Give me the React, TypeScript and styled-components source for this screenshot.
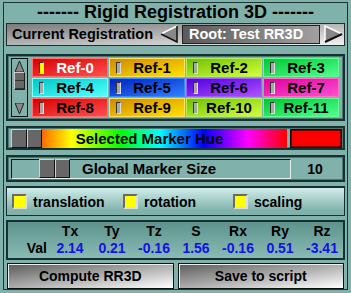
import React from "react";
import styled, { createGlobalStyle } from "styled-components";

const Global = createGlobalStyle`
  html, body { margin: 0; padding: 0; background: #80b1ab; }
  * { box-sizing: border-box; }
`;

const Page = styled.div`
  width: 351px;
  height: 293px;
  background: #80b1ab;
  padding: 2px 3px 3px 3px;
  font-family: "Liberation Sans", Arial, sans-serif;
  font-weight: bold;
  color: #000;
`;

const Frame = styled.div`
  height: 288px;
  border: 1px solid #1c3533;
  padding: 0 2px 0 2px;
  display: flex;
  flex-direction: column;
`;

const Title = styled.div`
  height: 18px;
  line-height: 18px;
  font-size: 18px;
  text-align: center;
  white-space: pre;
`;

const RegRow = styled.div`
  margin-top: 2px;
  height: 23px;
  border: 1px solid #2a2a2a;
  background: linear-gradient(to bottom right, #7a7a7a, #f2f2f2);
  display: flex;
  align-items: center;
  padding-left: 5px;
  font-size: 14.5px;
`;

const RegLabel = styled.span`
  flex: 0 0 148px;
`;

const ArrowBtn = styled.svg`
  flex: 0 0 auto;
`;

const RootBox = styled.div`
  width: 138px;
  height: 19px;
  border: 1px solid #222;
  background: linear-gradient(to right, #5a5a5a, #a0a0a0);
  color: #fff;
  font-size: 14.5px;
  line-height: 17px;
  padding-left: 6px;
  margin-left: 4px;
`;

const Panel = styled.div<{ $mt: number; $h: number }>`
  margin-top: ${(p) => p.$mt}px;
  height: ${(p) => p.$h}px;
  border: 2px solid #163230;
  box-shadow: inset 0 0 0 1px #4d7874;
  display: flex;
  align-items: center;
`;

const Scroll = styled.div`
  width: 17px;
  height: 59px;
  margin: 0 4px 0 3px;
  border: 1px solid #111;
  background: #80b1ab;
  display: flex;
  flex-direction: column;
  align-items: center;
  justify-content: space-between;
  padding: 2px 0;
`;

const ScrollThumb = styled.div`
  width: 11px;
  height: 18px;
  background: #666;
  border: 1px solid #222;
  border-top-color: #ccc;
  border-left-color: #ccc;
  display: flex;
  flex-direction: column;
  & > div { flex: 1; border-bottom: 1px solid #333; }
`;

const Grid = styled.div`
  display: grid;
  grid-template-columns: repeat(4, 76px);
  grid-auto-rows: 19px;
  gap: 1px;
`;

const Cell = styled.div<{ $a: string; $b: string; $edge: string; $light?: boolean }>`
  position: relative;
  background: linear-gradient(to bottom right, ${(p) => p.$a}, ${(p) => p.$b});
  border: 1px solid ${(p) => p.$edge};
  color: ${(p) => (p.$light ? "#fff" : "#000")};
  font-size: 15px;
  line-height: 17px;
  text-align: center;
  padding-left: 10px;
`;

const Marker = styled.span<{ $on?: boolean }>`
  position: absolute;
  left: 6px;
  top: 3px;
  width: 5px;
  height: 12px;
  background: ${(p) => (p.$on ? "#ffff00" : "#a8a8a8")};
  border: 1px solid #333;
  border-right-color: #ddd;
  border-bottom-color: #ddd;
`;

const SliderThumb = styled.div`
  flex: 0 0 auto;
  width: 31px;
  height: 19px;
  display: flex;
  & > div {
    flex: 1;
    background: #676767;
    border: 1px solid #111;
    border-top-color: #cfcfcf;
    border-left-color: #cfcfcf;
  }
`;

const HueTrack = styled.div`
  flex: 0 0 245px;
  height: 19px;
  background: linear-gradient(to right, #ff6a00, #ffff00 12%, #00ff00 32%, #00ffff 48%, #0000ff 66%, #ff00ff 84%, #ff0000);
  font-size: 15px;
  line-height: 19px;
  text-align: center;
  padding-right: 30px;
`;

const Swatch = styled.div`
  margin-left: 3px;
  width: 52px;
  height: 19px;
  background: #ff0000;
  border: 1px solid #111;
  box-shadow: inset 0 0 0 1px #7a0000;
`;

const SizeTrack = styled.div`
  margin-left: 3px;
  width: 280px;
  height: 20px;
  border: 1px solid #111;
  border-bottom-color: #e6f0ee;
  border-right-color: #e6f0ee;
  display: flex;
  align-items: center;
  padding-left: 27px;
  font-size: 15px;
`;

const SizeLabel = styled.span`
  margin-left: 12px;
`;

const SizeValue = styled.span`
  flex: 1;
  text-align: center;
  font-size: 14px;
  padding-right: 4px;
`;

const CheckPanel = styled.div`
  margin-top: 4px;
  height: 30px;
  border: 1px solid #163230;
  border-top: 2px solid #163230;
  background: linear-gradient(to bottom, #d0ecea, #80b1ab 85%);
  display: flex;
  align-items: center;
  padding-left: 5px;
  font-size: 14px;
`;

const Check = styled.label<{ $w: number }>`
  width: ${(p) => p.$w}px;
  display: flex;
  align-items: center;
  gap: 6px;
`;

const Box = styled.span`
  width: 15px;
  height: 15px;
  background: #ffff00;
  border: 2px solid #6a6a6a;
  border-right-color: #ddd;
  border-bottom-color: #ddd;
`;

const ValPanel = styled.div`
  margin-top: 4px;
  height: 40px;
  border: 2px solid #163230;
  background: linear-gradient(to bottom, #5e938d, #88bbb4);
  display: grid;
  grid-template-columns: 41px repeat(7, 42px);
  grid-template-rows: 17px 17px;
  align-content: center;
  font-size: 14px;
`;

const Head = styled.div`
  text-align: center;
  line-height: 17px;
`;

const ValLabel = styled.div`
  text-align: right;
  padding-right: 2px;
  line-height: 17px;
`;

const Num = styled.div`
  color: #1212e6;
  text-align: center;
  line-height: 17px;
`;

const Buttons = styled.div`
  margin-top: 3px;
  display: flex;
  gap: 4px;
  padding: 0 1px;
`;

const Button = styled.button`
  flex: 1;
  height: 26px;
  border: 1px solid #111;
  background: linear-gradient(to bottom right, #5a5a5a, #ffffff);
  font-family: "Liberation Sans", Arial, sans-serif;
  font-weight: bold;
  font-size: 14px;
  color: #000;
  padding: 0;
  box-shadow: inset 1px 1px 0 #eee;
`;

const refs = [
  { n: "Ref-0", a: "#d80000", b: "#ff5050", e: "#ff7070", light: true, on: true },
  { n: "Ref-1", a: "#d08a00", b: "#ffe000", e: "#ffe060" },
  { n: "Ref-2", a: "#70c000", b: "#d4ff40", e: "#b0f060" },
  { n: "Ref-3", a: "#00c830", b: "#50ff90", e: "#60ff90" },
  { n: "Ref-4", a: "#00c8c8", b: "#50ffff", e: "#80ffff" },
  { n: "Ref-5", a: "#0020c0", b: "#3080ff", e: "#3090ff" },
  { n: "Ref-6", a: "#5000e0", b: "#b050ff", e: "#a060ff" },
  { n: "Ref-7", a: "#e000a0", b: "#ff50d0", e: "#ff70d0" },
  { n: "Ref-8", a: "#d80000", b: "#ff5050", e: "#ff7070" },
  { n: "Ref-9", a: "#d08a00", b: "#ffe000", e: "#ffe060" },
  { n: "Ref-10", a: "#70c000", b: "#d4ff40", e: "#b0f060" },
  { n: "Ref-11", a: "#00c830", b: "#50ff90", e: "#60ff90" },
];

const heads = ["Tx", "Ty", "Tz", "S", "Rx", "Ry", "Rz"];
const vals = ["2.14", "0.21", "-0.16", "1.56", "-0.16", "0.51", "-3.41"];

export default function App() {
  return (
    <Page>
      <Global />
      <Frame>
        <Title>------- Rigid Registration 3D -------</Title>
        <RegRow>
          <RegLabel>Current Registration</RegLabel>
          <ArrowBtn width="18" height="18" viewBox="0 0 18 18">
            <polygon points="1,9 17,1 17,17" fill="#888" />
            <polyline points="17,1 1,9" stroke="#fff" strokeWidth="1.5" fill="none" />
            <polyline points="1,9 17,17 17,1" stroke="#111" strokeWidth="1.5" fill="none" />
          </ArrowBtn>
          <RootBox>Root: Test RR3D</RootBox>
          <ArrowBtn width="20" height="18" viewBox="0 0 20 18" style={{ marginLeft: 3 }}>
            <polygon points="2,1 19,9 2,17" fill="#888" />
            <polyline points="2,17 2,1 19,9" stroke="#fff" strokeWidth="1.5" fill="none" />
            <polyline points="19,9 2,17" stroke="#111" strokeWidth="2" fill="none" />
          </ArrowBtn>
        </RegRow>

        <Panel $mt={8} $h={67}>
          <Scroll>
            <svg width="9" height="11" viewBox="0 0 9 11">
              <polygon points="4.5,0 9,11 0,11" fill="#888" stroke="#222" strokeWidth="1" />
            </svg>
            <ScrollThumb>
              <div />
              <div />
            </ScrollThumb>
            <div style={{ flex: 1 }} />
            <svg width="9" height="11" viewBox="0 0 9 11">
              <polygon points="0,0 9,0 4.5,11" fill="#888" stroke="#222" strokeWidth="1" />
            </svg>
          </Scroll>
          <Grid>
            {refs.map((r) => (
              <Cell key={r.n} $a={r.a} $b={r.b} $edge={r.e} $light={r.light}>
                <Marker $on={r.on} />
                {r.n}
              </Cell>
            ))}
          </Grid>
        </Panel>

        <Panel $mt={5} $h={25} style={{ paddingLeft: 3 }}>
          <SliderThumb>
            <div />
            <div />
          </SliderThumb>
          <HueTrack>Selected Marker Hue</HueTrack>
          <Swatch />
        </Panel>

        <Panel $mt={5} $h={27}>
          <SizeTrack>
            <SliderThumb>
              <div />
              <div />
            </SliderThumb>
            <SizeLabel>Global Marker Size</SizeLabel>
          </SizeTrack>
          <SizeValue>10</SizeValue>
        </Panel>

        <CheckPanel>
          <Check $w={111}>
            <Box />
            translation
          </Check>
          <Check $w={110}>
            <Box />
            rotation
          </Check>
          <Check $w={100}>
            <Box />
            scaling
          </Check>
        </CheckPanel>

        <ValPanel>
          <div />
          {heads.map((h) => (
            <Head key={h}>{h}</Head>
          ))}
          <ValLabel>Val</ValLabel>
          {vals.map((v, i) => (
            <Num key={i}>{v}</Num>
          ))}
        </ValPanel>

        <Buttons>
          <Button>Compute RR3D</Button>
          <Button>Save to script</Button>
        </Buttons>
      </Frame>
    </Page>
  );
}
